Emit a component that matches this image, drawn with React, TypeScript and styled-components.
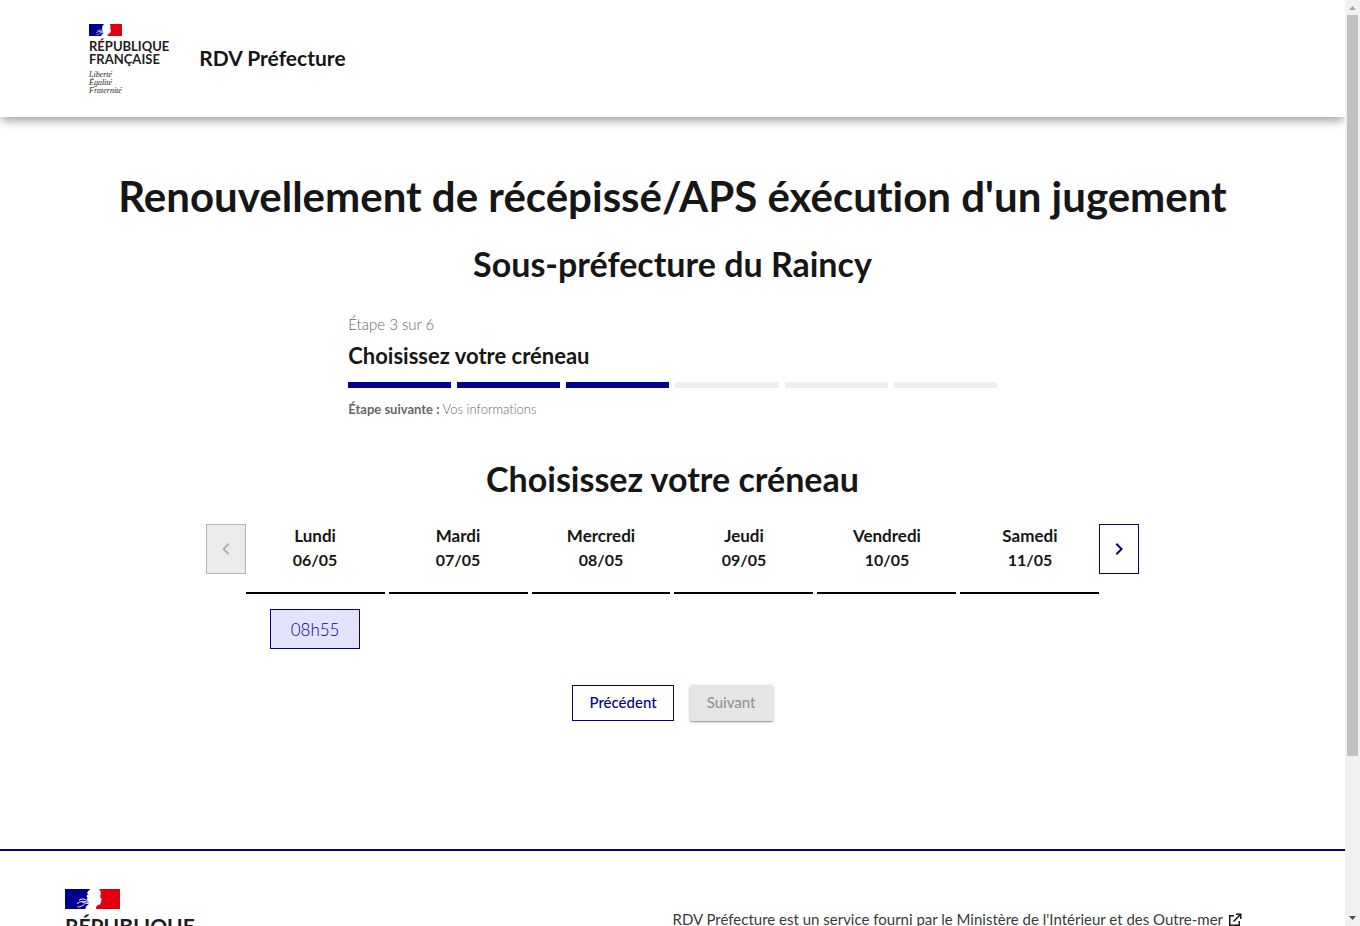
import React, { useState } from 'react';
import styled, { createGlobalStyle, css } from 'styled-components';

const BLUE = '#000091';
const INK = '#161616';

const GlobalStyle = createGlobalStyle`
  *, *::before, *::after { box-sizing: border-box; }
  body {
    margin: 0;
    background: #fff;
    color: ${INK};
    font-family: Lato, "Open Sans", sans-serif;
    font-size: 16px;
    line-height: 24px;
    font-variant-ligatures: none;
  }
  h1, h2, h3, p, ul, ol { margin: 0; padding: 0; }
  ul, ol { list-style: none; }
  button { font-family: inherit; cursor: pointer; }
  button:disabled { cursor: default; }
`;

const Shell = styled.div`
  display: flex;
  height: 100vh;
`;

const Page = styled.div`
  flex: 1;
  min-width: 0;
  overflow-x: hidden;
  overflow-y: auto;
  scrollbar-width: none;
`;

const ScrollTrack = styled.div`
  display: flex;
  flex-direction: column;
  align-items: center;
  width: 15px;
  background: #f1f1f1;
`;

const ScrollArrow = styled.svg`
  flex: none;
  width: 15px;
  height: 15px;
`;

const ScrollRail = styled.div`
  flex: 1;
  width: 11px;
`;

const ScrollThumb = styled.div`
  height: 82.7%;
  background: #c1c1c1;
`;

const Header = styled.header`
  display: flex;
  align-items: center;
  gap: 30px;
  padding: 24px 88px 22px 89px;
  box-shadow: 0 8px 8px -4px rgba(0, 0, 0, 0.08), 0 4px 10px -1px rgba(0, 0, 0, 0.34);
`;

const ServiceName = styled.p`
  padding-bottom: 3px;
  font-size: 21px;
  font-weight: 700;
`;

const Brand = styled.div<{ $large?: boolean }>`
  display: flex;
  flex-direction: column;
  align-items: flex-start;
  color: #1e1e1e;

  svg {
    display: block;
    width: ${({ $large }) => ($large ? 55 : 33)}px;
    height: ${({ $large }) => ($large ? 20 : 12)}px;
  }
`;

const BrandName = styled.p<{ $large?: boolean }>`
  margin-top: ${({ $large }) => ($large ? 5 : 4)}px;
  font-size: ${({ $large }) => ($large ? 21 : 13)}px;
  line-height: ${({ $large }) => ($large ? 24 : 13)}px;
  font-weight: 700;
`;

const Motto = styled.p<{ $large?: boolean }>`
  margin-top: ${({ $large }) => ($large ? 8 : 5)}px;
  font-family: "Liberation Serif", serif;
  font-style: italic;
  font-size: ${({ $large }) => ($large ? 13 : 8)}px;
  line-height: ${({ $large }) => ($large ? 14 : 8)}px;
`;

const Main = styled.main`
  display: flex;
  flex-direction: column;
  align-items: center;
  padding: 51px 24px 128px;
`;

const Title = styled.h1`
  font-size: 42px;
  line-height: 56px;
  text-align: center;
`;

const Subtitle = styled.h2`
  margin-top: 20px;
  font-size: 34px;
  line-height: 40px;
  text-align: center;
`;

const Stepper = styled.section`
  width: 50%;
  margin-top: 28px;
  margin-bottom: 20px;
  color: #666;
`;

const StepCount = styled.p`
  font-size: 15px;
  font-weight: 300;
`;

const StepTitle = styled.h3`
  margin-top: 4px;
  color: ${INK};
  font-size: 22px;
  line-height: 32px;
`;

const StepBars = styled.ol`
  display: flex;
  gap: 6px;
  margin: 10px 0 11px;
`;

const StepBar = styled.li<{ $done: boolean }>`
  flex: 1;
  height: 6px;
  background: ${({ $done }) => ($done ? BLUE : '#eee')};
`;

const NextStep = styled.p`
  font-size: 13px;
  line-height: 20px;
  font-weight: 300;

  strong { font-weight: 700; }
`;

const Calendar = styled.div`
  display: flex;
  align-items: flex-start;
  width: 72%;
  margin-top: 25px;
`;

const WeekButton = styled.button`
  display: flex;
  align-items: center;
  justify-content: center;
  flex: none;
  width: 40px;
  height: 50px;
  padding: 0;
  border: 1px solid ${BLUE};
  background: #fff;
  color: ${BLUE};

  &:disabled {
    border-color: #b3b3b3;
    background: #ebebeb;
    color: #b3b3b3;
  }
`;

const Days = styled.div`
  display: grid;
  grid-template-columns: repeat(6, 1fr);
  gap: 4px;
  flex: 1;
`;

const Day = styled.section`
  display: flex;
  flex-direction: column;
  align-items: center;
  gap: 15px;
`;

const DayHeading = styled.h3`
  align-self: stretch;
  height: 70px;
  border-bottom: 2px solid #000;
  font-size: 17px;
  line-height: 24px;
  text-align: center;
`;

const DayName = styled.span`
  display: block;
`;

const DayDate = styled.span`
  display: block;
  font-size: 16px;
`;

const Slot = styled.button`
  width: 90px;
  height: 40px;
  padding: 0;
  border: 1px solid ${BLUE};
  background: #e3e3fd;
  color: ${BLUE};
  font-size: 17px;
  font-weight: 300;
`;

const Actions = styled.div`
  display: flex;
  gap: 16px;
  margin-top: 36px;
`;

const Action = styled.button<{ $filled?: boolean }>`
  height: 36px;
  padding: 0 16px 2px;
  border: 1px solid ${BLUE};
  background: #fff;
  color: ${BLUE};
  font-size: 15px;
  font-weight: 500;

  ${({ $filled }) =>
    $filled &&
    css`
      border: 0;
      padding: 0 17px 2px;
      border-radius: 2px;
      background: ${BLUE};
      color: #fff;
      box-shadow: 0 1px 3px rgba(0, 0, 0, 0.3), 0 1px 1px rgba(0, 0, 0, 0.2);

      &:disabled {
        background: #e5e5e5;
        color: #929292;
      }
    `}
`;

const Footer = styled.footer`
  display: grid;
  grid-template-columns: 1fr 1fr;
  padding: 38px 0 40px;
  border-top: 2px solid ${BLUE};
`;

const FooterBrand = styled.div`
  padding-left: 65px;
`;

const FooterText = styled.p`
  padding: 18px 24px 0 0;
  font-size: 15px;
`;

const FooterLink = styled.a`
  color: #3a3a3a;
  text-decoration: none;

  svg {
    width: 14px;
    height: 14px;
    margin-left: 5px;
    vertical-align: -2px;
    color: ${INK};
  }
`;

const FlagMark = () => (
  <svg viewBox="0 0 165 60" preserveAspectRatio="none" aria-hidden="true">
    <path fill="#fff" d="M0 0h165v60H0z" />
    <path
      fill={BLUE}
      d="M0 0H77C71 3 70 8 66 11L69 16L64 21L67 26L66 33C70 38 73 42 71 46C66 49 63 53 61 60H0z"
    />
    <path
      fill="#e1000f"
      d="M102 0H165V60H93C93 54 95 50 99 48C104 48 108 47 106 43L109 39L107 36L111 32L106 25C107 20 106 16 108 12C107 7 105 4 102 0z"
    />
    <path
      fill="none"
      stroke="#fff"
      strokeWidth="3"
      d="M42 34C50 28 58 29 68 36M36 44C46 36 56 36 70 40M50 38C56 42 62 44 72 43M38 54C46 54 52 50 58 46"
    />
    <path fill="none" stroke="#777" strokeWidth="2" d="M103 21h5M105 25h3" />
  </svg>
);

const Republic = ({ large }: { large?: boolean }) => (
  <Brand $large={large}>
    <FlagMark />
    <BrandName $large={large}>
      RÉPUBLIQUE
      <br />
      FRANÇAISE
    </BrandName>
    <Motto $large={large}>
      Liberté
      <br />
      Égalité
      <br />
      Fraternité
    </Motto>
  </Brand>
);

const Chevron = ({ left }: { left?: boolean }) => (
  <svg width="24" height="24" viewBox="0 0 24 24" fill="currentColor" aria-hidden="true">
    <path
      d={
        left
          ? 'M15.41 7.41 14 6l-6 6 6 6 1.41-1.41L10.83 12z'
          : 'M10 6 8.59 7.41 13.17 12l-4.58 4.59L10 18l6-6z'
      }
    />
  </svg>
);

const ExternalIcon = () => (
  <svg viewBox="0 0 14 14" fill="none" stroke="currentColor" strokeWidth="1.5" aria-hidden="true">
    <path d="M6 2.75H1.75v9.5h9.5V8M8 1.25h4.75V6M12.5 1.5 5.5 8.5" />
  </svg>
);

const STEPS = 6;
const CURRENT_STEP = 3;

const WEEK = [
  { name: 'Lundi', date: '06/05', slots: ['08h55'] },
  { name: 'Mardi', date: '07/05', slots: [] },
  { name: 'Mercredi', date: '08/05', slots: [] },
  { name: 'Jeudi', date: '09/05', slots: [] },
  { name: 'Vendredi', date: '10/05', slots: [] },
  { name: 'Samedi', date: '11/05', slots: [] },
];

export default function App() {
  const [chosen, setChosen] = useState<string | null>(null);

  return (
    <Shell>
      <GlobalStyle />
      <Page>
        <Header>
          <Republic />
          <ServiceName>RDV Préfecture</ServiceName>
        </Header>
        <Main>
          <Title>Renouvellement de récépissé/APS éxécution d'un jugement</Title>
          <Subtitle>Sous-préfecture du Raincy</Subtitle>
          <Stepper>
            <StepCount>Étape 3 sur 6</StepCount>
            <StepTitle>Choisissez votre créneau</StepTitle>
            <StepBars>
              {Array.from({ length: STEPS }, (_, i) => (
                <StepBar key={i} $done={i < CURRENT_STEP} />
              ))}
            </StepBars>
            <NextStep>
              <strong>Étape suivante :</strong> Vos informations
            </NextStep>
          </Stepper>
          <Subtitle>Choisissez votre créneau</Subtitle>
          <Calendar>
            <WeekButton disabled aria-label="Semaine précédente">
              <Chevron left />
            </WeekButton>
            <Days>
              {WEEK.map((day) => (
                <Day key={day.date}>
                  <DayHeading>
                    <DayName>{day.name}</DayName>
                    <DayDate>{day.date}</DayDate>
                  </DayHeading>
                  {day.slots.map((slot) => (
                    <Slot
                      key={slot}
                      aria-pressed={chosen === slot}
                      onClick={() => setChosen(slot)}
                    >
                      {slot}
                    </Slot>
                  ))}
                </Day>
              ))}
            </Days>
            <WeekButton aria-label="Semaine suivante">
              <Chevron />
            </WeekButton>
          </Calendar>
          <Actions>
            <Action>Précédent</Action>
            <Action $filled disabled={!chosen}>
              Suivant
            </Action>
          </Actions>
        </Main>
        <Footer>
          <FooterBrand>
            <Republic large />
          </FooterBrand>
          <FooterText>
            <FooterLink href="#ministere">
              RDV Préfecture est un service fourni par le Ministère de l'Intérieur et des Outre-mer
              <ExternalIcon />
            </FooterLink>
          </FooterText>
        </Footer>
      </Page>
      <ScrollTrack aria-hidden="true">
        <ScrollArrow viewBox="0 0 15 15">
          <path fill="#a3a3a3" d="M4 10h7L7.500 6z" />
        </ScrollArrow>
        <ScrollRail>
          <ScrollThumb />
        </ScrollRail>
        <ScrollArrow viewBox="0 0 15 15">
          <path fill="#505050" d="M4 5h7L7.500 9z" />
        </ScrollArrow>
      </ScrollTrack>
    </Shell>
  );
}
